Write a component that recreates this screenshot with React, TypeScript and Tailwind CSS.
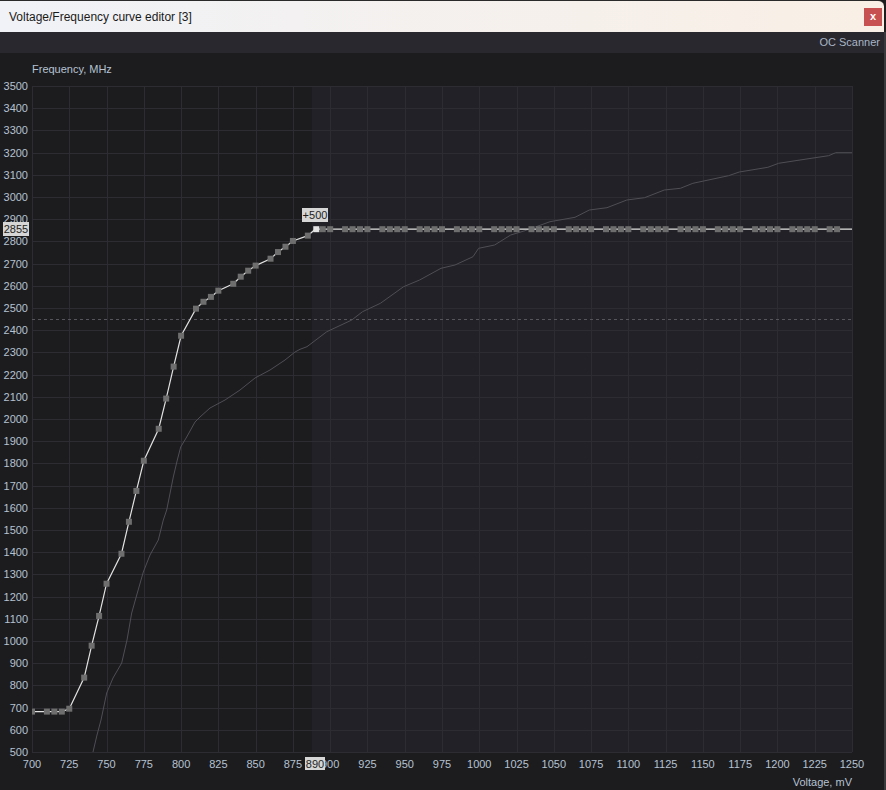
import React from 'react';

// plot geometry, page pixels
const LEFT = 32;
const RIGHT = 852;
const TOP = 86;
const BOTTOM = 752;

const X = (mv: number) => LEFT + ((mv - 700) * (RIGHT - LEFT)) / 550;
const Y = (mhz: number) => TOP + ((3500 - mhz) * (BOTTOM - TOP)) / 3000;

const LABEL = '#b6c2d1';
const FONT = '"Liberation Sans", Arial, sans-serif';

// edited curve, left of the selected point
const rising: [number, number][] = [
  [700, 682], [710, 682], [715, 682], [720, 682], [725, 695],
  [735, 835], [740, 979], [745, 1113], [750, 1258],
  [760, 1393], [765, 1537], [770, 1676], [775, 1812],
  [785, 1956], [790, 2092], [795, 2236], [800, 2375],
  [810, 2497], [815, 2528], [820, 2550], [825, 2578],
  [835, 2609], [840, 2641], [845, 2668], [850, 2691],
  [860, 2722], [865, 2752], [870, 2776], [875, 2802],
  [885, 2826],
];

const flat: number[] = [];
for (let v = 895; v <= 1240; v += 5) {
  if ((v - 705) % 25 !== 0) flat.push(v);
}

// default (stock) curve traced in page pixels
const stock: [number, number][] = [
  [93, 752], [97, 735], [101, 720], [106.7, 693], [113, 678], [121.7, 663],
  [127, 640], [131.7, 613], [137.3, 593], [143.3, 572], [150, 555], [158.3, 540],
  [163.3, 520], [166.7, 510], [173.3, 477], [177.3, 460], [180.7, 447], [186.7, 437],
  [195, 422], [200, 417], [210, 408], [225, 400], [240, 390], [255, 378],
  [270, 370], [285, 360], [295, 352], [300, 349.3], [307, 346.7], [326.8, 331.7],
  [351.8, 320], [362.5, 311.7], [380.4, 303.3], [403.6, 286.7], [419.6, 280],
  [441, 268.3], [455, 265], [473, 256.7], [478.6, 248.3], [494.6, 245],
  [510.7, 235], [525, 230.7], [550, 221.7], [575, 217.3], [589.3, 210],
  [607, 207.7], [626.8, 200], [644.6, 197.7], [664.3, 190], [680.4, 188.3],
  [692.9, 183.3], [728.6, 175.7], [739.3, 172], [767.9, 167.3], [778.6, 163.3],
  [800, 160], [828.6, 155.7], [835.7, 152.7], [852, 152.7],
];

const freqTicks = Array.from({ length: 31 }, (_, i) => 500 + i * 100);
const voltTicks = Array.from({ length: 23 }, (_, i) => 700 + i * 25);

function CurveChart() {
  const selX = X(890);
  const selY = Y(2855);
  const edited = [...rising.map(([v, f]) => `${X(v)},${Y(f)}`), `${selX},${selY}`, `${RIGHT},${selY}`].join(' ');

  return (
    <svg width={884} height={737} viewBox="0 53 884 737" className="block" style={{ fontFamily: FONT }}>
      <defs>
        <clipPath id="plot">
          <rect x={LEFT} y={TOP} width={RIGHT - LEFT} height={BOTTOM - TOP} />
        </clipPath>
      </defs>

      <text x={32} y={72.5} fontSize={11} fill={LABEL}>Frequency, MHz</text>

      {/* backgrounds */}
      <rect x={LEFT} y={TOP} width={312 - LEFT} height={BOTTOM - TOP} fill="#1c1c1f" />
      <rect x={312} y={TOP} width={RIGHT - 312} height={BOTTOM - TOP} fill="#212127" />

      {/* grid */}
      <g stroke="#2c2c32" strokeWidth={1} shapeRendering="crispEdges">
        {freqTicks.map((f) => (
          <line key={f} x1={LEFT} x2={RIGHT} y1={Math.round(Y(f)) + 0.5} y2={Math.round(Y(f)) + 0.5} />
        ))}
        {voltTicks.map((v) => (
          <line key={v} x1={Math.round(X(v)) + 0.5} x2={Math.round(X(v)) + 0.5} y1={TOP} y2={BOTTOM} />
        ))}
      </g>

      <line x1={LEFT} x2={RIGHT} y1={319.5} y2={319.5} stroke="#55555b" strokeDasharray="3 3" shapeRendering="crispEdges" />

      <g clipPath="url(#plot)">
        <polyline points={stock.map(([x, y]) => `${x},${y}`).join(' ')} fill="none" stroke="#4e4e54" strokeWidth={1} />
        <polyline points={edited} fill="none" stroke="#e2e2e2" strokeWidth={1.2} />
        {rising.map(([v, f]) => (
          <rect key={v} x={X(v) - 3} y={Y(f) - 3} width={6} height={6} fill="#6e6e6e" />
        ))}
        {flat.map((v) => (
          <rect key={v} x={X(v) - 3} y={selY - 3} width={6} height={6} fill="#6e6e6e" />
        ))}
        <rect x={selX - 2} y={selY - 3} width={6} height={6} fill="#e4e4e4" />
      </g>

      {/* y axis labels */}
      {freqTicks.map((f) => (
        <text key={f} x={28} y={Y(f) + 4} fontSize={11} fill={LABEL} textAnchor="end">
          {f}
        </text>
      ))}

      {/* x axis labels */}
      {voltTicks.map((v) => (
        <text key={v} x={X(v)} y={768} fontSize={11} fill={LABEL} textAnchor="middle">
          {v}
        </text>
      ))}
      <text x={852} y={786} fontSize={11} fill={LABEL} textAnchor="end">Voltage, mV</text>

      {/* selection markers */}
      <rect x={3} y={222} width={26} height={14} fill="#d6d6d6" />
      <text x={16} y={233} fontSize={11} fill="#1e1e22" textAnchor="middle">2855</text>

      <rect x={302} y={208} width={26} height={14} fill="#d6d6d6" />
      <text x={315} y={219} fontSize={11} fill="#1e1e22" textAnchor="middle">+500</text>

      <rect x={305} y={757} width={20} height={13} fill="#d6d6d6" />
      <text x={315} y={768} fontSize={11} fill="#1e1e22" textAnchor="middle">890</text>
    </svg>
  );
}

export default function App() {
  return (
    <div className="w-[886px] h-[790px] flex bg-[#1b1b1d] overflow-hidden" style={{ fontFamily: FONT }}>
      <div className="w-[884px] flex flex-col">
        {/* Title bar */}
        <div className="h-8 flex items-center justify-between border-t border-[#2a2a2a] rounded-tr-[6px] bg-linear-to-r from-[#f0f2f7] to-[#f9efe5] pl-[9px] pr-[2px]">
          <span className="text-[12px] text-[#1a1a1a]">Voltage/Frequency curve editor [3]</span>
          <button className="w-[18px] h-[18px] bg-[#c75050] text-white text-[11px] font-bold leading-none flex items-center justify-center">
            x
          </button>
        </div>

        {/* Toolbar */}
        <div className="h-[21px] bg-[#28282e] flex items-center justify-end pr-[4px]">
          <span className="text-[11px] text-[#aab6c6]">OC Scanner</span>
        </div>

        <div className="flex-1 bg-[#1c1c1f]">
          <CurveChart />
        </div>
      </div>
      <div className="w-[2px] flex flex-col">
        <div className="h-8 bg-[#1e1e1e]" />
        <div className="flex-1 bg-[#3a3a3c]" />
      </div>
    </div>
  );
}
